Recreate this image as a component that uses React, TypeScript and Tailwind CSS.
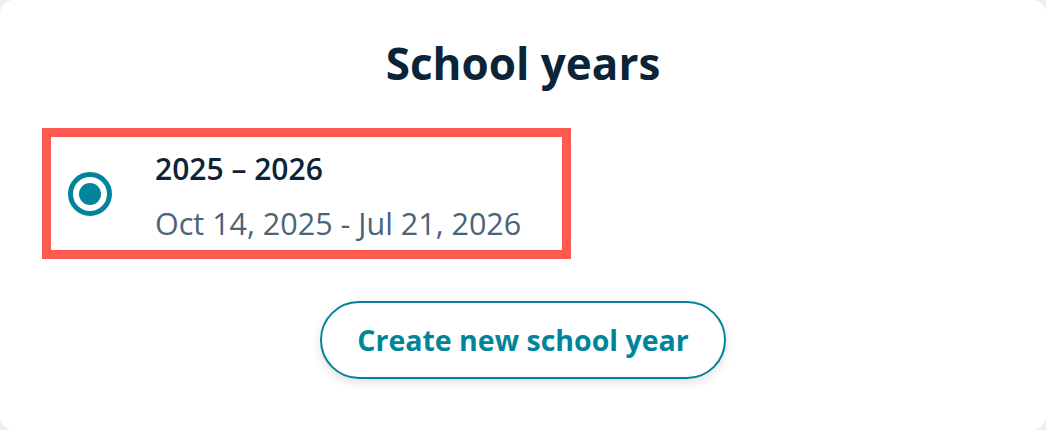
export default function App() {
  return (
    <div className="h-[430px] w-[1046px] bg-[#eeeeee] font-['Open_Sans',sans-serif]">
      <div className="flex h-full w-full flex-col rounded-[14px] bg-white">
        <h1 className="mt-[33px] text-center text-[44px] font-bold leading-[60px] text-[#0b2438]">
          School years
        </h1>
        <div className="ml-[42px] mt-[35px] flex h-[131px] w-[529px] items-start border-[9px] border-[#ff5a4f] pl-[17px]">
          <span className="mt-[35px] flex h-[44px] w-[44px] items-center justify-center rounded-full border-[5px] border-[#00849a]">
            <span className="h-[22px] w-[22px] rounded-full bg-[#00849a]" />
          </span>
          <div className="ml-[43px] flex flex-col pt-[12px]">
            <span className="text-[30px] font-semibold leading-[40px] text-[#0b2438]">2025 – 2026</span>
            <span className="mt-[14px] text-[30.5px] leading-[40px] text-[#4a6478]">
              Oct 14, 2025 - Jul 21, 2026
            </span>
          </div>
        </div>
        <div className="mt-[42px] flex justify-center">
          <button className="h-[78px] w-[406px] rounded-full border-2 border-[#00849a] bg-white text-[28.5px] font-bold text-[#00849a] shadow-[0_4px_10px_rgba(0,0,0,0.12)]">
            Create new school year
          </button>
        </div>
      </div>
    </div>
  );
}
